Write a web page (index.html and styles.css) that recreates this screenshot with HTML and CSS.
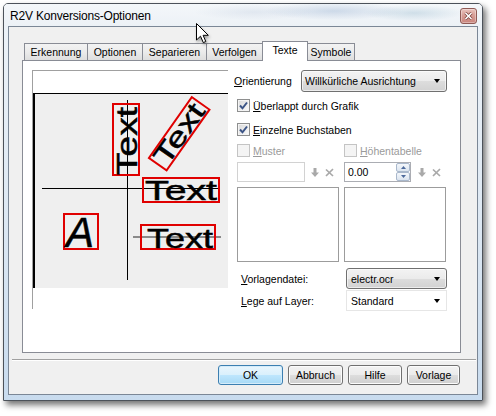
FILE: index.html
```html
<!DOCTYPE html>
<html>
<head>
<meta charset="utf-8">
<title>R2V Konversions-Optionen</title>
<link rel="stylesheet" href="styles.css">
</head>
<body>
<div class="window">
  <div class="titlebar">
    <span class="title">R2V Konversions-Optionen</span>
    <span class="close"><svg width="9" height="8" viewBox="0 0 9 8"><path d="M1.5 1 L7.5 7 M7.5 1 L1.5 7" stroke="#7a3f3a" stroke-width="3"/><path d="M1.5 1 L7.5 7 M7.5 1 L1.5 7" stroke="#fff" stroke-width="1.6"/></svg></span>
  </div>
  <div class="client">
    <div class="tabs">
      <div class="tab t1">Erkennung</div>
      <div class="tab t2">Optionen</div>
      <div class="tab t3">Separieren</div>
      <div class="tab t4">Verfolgen</div>
      <div class="tab t5 active">Texte</div>
      <div class="tab t6">Symbole</div>
    </div>
    <div class="panel">
      <div class="preview">
        <svg width="195" height="238" viewBox="33 71 195 238" font-family="Liberation Sans, Arial, sans-serif">
          <rect x="33" y="93" width="195" height="195" fill="#efefef"/>
          <path d="M33 93.5 H228" stroke="#000" stroke-width="1"/>
          <path d="M34 93 V288" stroke="#000" stroke-width="2"/>
          <path d="M42 188.5 H220 M127.5 100 V280" stroke="#000" stroke-width="1"/>
          <path d="M133 237 H221" stroke="#8a8a8a" stroke-width="2"/>
          <g fill="none" stroke="#e00000" stroke-width="2">
            <rect x="113" y="104" width="26" height="71"/>
            <rect x="143" y="178" width="76" height="24"/>
            <rect x="64" y="214" width="34" height="35"/>
            <rect x="141" y="225" width="74" height="24"/>
          </g>
          <g stroke="#000" stroke-width="0.5">
            <text transform="translate(137 175) rotate(-90)" font-size="29" textLength="68" lengthAdjust="spacingAndGlyphs">Text</text>
            <text x="145" y="200" font-size="28" textLength="72" lengthAdjust="spacingAndGlyphs">Text</text>
            <text x="147" y="248" font-size="27" textLength="66" lengthAdjust="spacingAndGlyphs">Text</text>
            <text x="66" y="247" font-size="42" font-style="italic">A</text>
          </g>
          <g transform="translate(179.2 133.8) rotate(-54.8)">
            <rect x="-37.2" y="-10.8" width="74.4" height="21.6" fill="none" stroke="#e00000" stroke-width="2"/>
            <text x="-34" y="9" font-size="27" textLength="68" lengthAdjust="spacingAndGlyphs" stroke="#000" stroke-width="0.5">Text</text>
          </g>
        </svg>
      </div>
      <div class="controls">
        <div class="row-orient">
          <span class="lbl orient-lbl"><u>O</u>rientierung</span>
          <div class="combo orient-combo"><span>Willkürliche Ausrichtung</span><span class="arrow"></span></div>
        </div>
        <div class="check c1">
          <span class="box"><svg width="11" height="11" viewBox="0 0 11 11"><path d="M2 5.5 L4.5 8.3 L9 2.5" fill="none" stroke="#3b5486" stroke-width="2"/></svg></span>
          <span><u>Ü</u>berlappt durch Grafik</span>
        </div>
        <div class="check c2">
          <span class="box"><svg width="11" height="11" viewBox="0 0 11 11"><path d="M2 5.5 L4.5 8.3 L9 2.5" fill="none" stroke="#3b5486" stroke-width="2"/></svg></span>
          <span><u>E</u>inzelne Buchstaben</span>
        </div>
        <div class="grid">
          <div class="check disabled"><span class="box"></span><span><u>M</u>uster</span></div>
          <div class="check disabled"><span class="box"></span><span><u>H</u>öhentabelle</span></div>
          <div class="editrow">
            <div class="edit e-left"></div>
            <div class="icons">
              <svg width="8" height="9" viewBox="0 0 8 9"><path d="M2.5 0 H5.5 V4.5 H8 L4 9 L0 4.5 H2.5 Z" fill="#a9a9a9"/></svg>
              <svg width="9" height="9" viewBox="0 0 9 9"><path d="M1 1.5 L8 8 M8 1 L1 8" stroke="#a9a9a9" stroke-width="1.7"/></svg>
            </div>
          </div>
          <div class="editrow">
            <div class="edit e-right"><span class="val">0.00</span>
              <div class="spin">
                <span class="sb"><svg width="5" height="3" viewBox="0 0 5 3"><path d="M0 3 L2.5 0 L5 3 Z" fill="#4d6a9c"/></svg></span>
                <span class="sb"><svg width="5" height="3" viewBox="0 0 5 3"><path d="M0 0 L2.5 3 L5 0 Z" fill="#4d6a9c"/></svg></span>
              </div>
            </div>
            <div class="icons">
              <svg width="8" height="9" viewBox="0 0 8 9"><path d="M2.5 0 H5.5 V4.5 H8 L4 9 L0 4.5 H2.5 Z" fill="#a9a9a9"/></svg>
              <svg width="9" height="9" viewBox="0 0 9 9"><path d="M1 1.5 L8 8 M8 1 L1 8" stroke="#a9a9a9" stroke-width="1.7"/></svg>
            </div>
          </div>
          <div class="list"></div>
          <div class="list"></div>
        </div>
        <div class="formrow fr1">
          <span class="lbl"><u>V</u>orlagendatei:</span>
          <div class="combo small-combo"><span>electr.ocr</span><span class="arrow"></span></div>
        </div>
        <div class="formrow fr2">
          <span class="lbl"><u>L</u>ege auf Layer:</span>
          <div class="combo small-combo flat"><span>Standard</span><span class="arrow"></span></div>
        </div>
      </div>
    </div>
    <div class="sep"></div>
    <div class="buttons">
      <div class="btn default b-ok">OK</div>
      <div class="btn b-ab">Abbruch</div>
      <div class="btn b-hi">Hilfe</div>
      <div class="btn b-vo">Vorlage</div>
    </div>
  </div>
</div>
<svg class="cursor" width="14" height="22" viewBox="0 0 14 22"><path d="M0.5 0.5 V17 L4.5 13.2 L7.3 19.6 L9.8 18.5 L7.1 12.3 H12.3 Z" fill="#fff" stroke="#000" stroke-width="1" stroke-linejoin="round"/></svg>
</body>
</html>
```
FILE: styles.css
```css
* { box-sizing: border-box; }
html, body { margin: 0; padding: 0; background: #fff; }
body {
  width: 496px; height: 416px; overflow: hidden;
  font-family: "Liberation Sans", Arial, sans-serif;
  font-size: 10.5px; color: #000;
}
u { text-decoration: underline; text-underline-offset: 1px; }

.window {
  margin: 3px 0 0 3px;
  width: 480px; height: 398px;
  border: 1px solid #4c525a;
  border-radius: 5px 5px 0 0;
  background: linear-gradient(180deg, #eef3f8 0%, #dde8f3 55%, #c8dbee 100%);
  box-shadow: 3px 4px 6px rgba(0,0,0,0.55);
  display: flex; flex-direction: column;
}
.titlebar {
  height: 22px; flex: none;
  display: flex; align-items: flex-start; justify-content: space-between;
  padding: 0 5px 0 6px;
  background:
    radial-gradient(ellipse 70px 9px at 330px 7px, rgba(110,145,190,0.28), transparent),
    radial-gradient(ellipse 50px 8px at 410px 9px, rgba(120,165,190,0.28), transparent),
    radial-gradient(ellipse 60px 8px at 250px 8px, rgba(150,170,200,0.18), transparent),
    linear-gradient(180deg, #f4f7fa, #ecf1f6);
  border-radius: 4px 4px 0 0;
}
.title { font-size: 12px; letter-spacing: -0.2px; line-height: 22px; padding-top: 1px; }
.close {
  margin-top: 4px; width: 17px; height: 16px;
  border: 1px solid #8f5a55; border-radius: 3px;
  background: linear-gradient(180deg, #e9c3bd 0%, #d79b93 50%, #c9857d 100%);
  box-shadow: inset 0 0 0 1px rgba(255,255,255,0.35);
  display: flex; align-items: center; justify-content: center;
}
.close svg { display: block; }

.client {
  margin: 0 4px; height: 369px; flex: none;
  border: 1px solid #7b8796;
  background: #f0f0f0;
  display: flex; flex-direction: column;
}

.tabs { display: flex; align-items: flex-end; height: 33px; padding: 14px 0 0 15px; flex: none; }
.tab {
  height: 17px; margin-left: -1px;
  border: 1px solid #898c95; border-bottom: none;
  background: linear-gradient(180deg, #f3f3f3 0%, #ebebeb 50%, #dedede 100%);
  display: flex; align-items: center; justify-content: center;
  white-space: nowrap; padding-bottom: 1px;
}
.tab.t1 { margin-left: 0; width: 64px; }
.tab.t2 { width: 56px; }
.tab.t3 { width: 65px; }
.tab.t4 { width: 57px; }
.tab.t5 { width: 46px; }
.tab.t6 { width: 48px; }
.tab.active {
  height: 20px; margin-bottom: -1px;
  background: #fff; position: relative; z-index: 1;
  padding-bottom: 3px;
}

.panel {
  margin-left: 13px; width: 439px; height: 293px; flex: none;
  border: 1px solid #898c95; background: #fff;
  display: flex; align-items: flex-start;
}
.preview {
  margin: 9px 0 0 9px; width: 196px; height: 239px; flex: none;
  border-top: 1px solid #a0a0a0; border-left: 1px solid #a0a0a0;
}
.preview svg { display: block; }

.controls { margin: 9px 0 0 9px; width: 210px; display: flex; flex-direction: column; }
.row-orient { display: flex; align-items: center; height: 22px; }
.orient-lbl { margin-left: -3px; }
.combo {
  height: 22px; border: 1px solid #707070; border-radius: 3px;
  background: linear-gradient(180deg, #f3f3f3 0%, #ebebeb 50%, #dddddd 51%, #d2d2d2 100%);
  box-shadow: inset 0 0 0 1px rgba(255,255,255,0.6);
  display: flex; align-items: center; padding-left: 3px; white-space: nowrap;
}
.orient-combo { margin-left: auto; width: 146px; }
.arrow {
  margin-left: auto; margin-right: 6px; width: 0; height: 0;
  border-left: 3.5px solid transparent; border-right: 3.5px solid transparent;
  border-top: 4px solid #000;
}

.check { display: flex; align-items: center; height: 13px; gap: 3px; white-space: nowrap; }
.c1 { margin-top: 7px; }
.c2 { margin-top: 11px; }
.box {
  width: 13px; height: 13px; flex: none;
  border: 1px solid #8e8f8f;
  background: linear-gradient(135deg, #d8d8d8, #fbfbfb);
  box-shadow: inset 0 0 0 1px #f4f4f4;
  display: flex; align-items: center; justify-content: center;
}
.box svg { display: block; }
.check.disabled { color: #9a9a9a; }
.check.disabled .box { border-color: #c4c4c4; background: #f4f4f4; box-shadow: none; }

.grid {
  margin-top: 8px;
  display: grid; grid-template-columns: 102px 102px; grid-template-rows: 13px 20px 75px;
  column-gap: 5px; row-gap: 5px;
}
.editrow { display: flex; align-items: center; }
.edit { height: 20px; background: #fff; display: flex; align-items: center; }
.e-left { width: 68px; border: 1px solid #d2d2d2; }
.e-right { width: 67px; border: 1px solid #abadb3; padding-left: 3px; }
.val { flex: 1; }
.spin { width: 14px; height: 18px; margin-right: 0; display: flex; flex-direction: column; }
.sb {
  flex: 1; border: 1px solid #a9b8cc; border-radius: 2px;
  background: linear-gradient(180deg, #f4f7fb, #dbe4ef);
  display: flex; align-items: center; justify-content: center;
}
.sb svg { display: block; }
.icons { display: flex; align-items: center; gap: 6px; margin-left: 6px; }
.icons svg { display: block; }
.e-right + .icons { margin-left: 7px; }
.list { border: 1px solid #9c9c9c; background: #fff; }

.formrow { display: grid; grid-template-columns: 102px 103px; column-gap: 5px; height: 21px; align-items: center; }
.formrow .lbl { padding-left: 4px; }
.fr1 { margin-top: 6px; }
.fr2 { margin-top: 1px; }
.small-combo { height: 21px; margin-left: 2px; width: 101px; padding-left: 4px; }
.combo.flat { background: #fff; border: 1px solid #e6e6e6; border-radius: 0; box-shadow: none; }

.sep { margin: 6px 1px 0 3px; height: 2px; border-top: 1px solid #a0a0a0; border-bottom: 1px solid #fff; flex: none; }
.buttons { display: flex; justify-content: flex-end; gap: 5px; padding-right: 17px; margin-top: 4px; }
.btn {
  height: 20px; border: 1px solid #707070; border-radius: 3px;
  background: linear-gradient(180deg, #f3f3f3 0%, #ebebeb 50%, #dddddd 51%, #cfcfcf 100%);
  box-shadow: inset 0 0 0 1px #fcfcfc;
  display: flex; align-items: center; justify-content: center;
}
.btn.default {
  border-color: #3c7fb1;
  background: linear-gradient(180deg, #eaf6fd 0%, #d9f0fc 50%, #bee6fd 51%, #a7d9f5 100%);
  box-shadow: inset 0 0 0 1px #d4ecfa;
}
.b-ok { width: 65px; }
.b-ab { width: 55px; }
.b-hi { width: 54px; }
.b-vo { width: 53px; }

.cursor { position: absolute; left: 196px; top: 23px; filter: drop-shadow(1px 2px 1.5px rgba(0,0,0,0.35)); }
```
